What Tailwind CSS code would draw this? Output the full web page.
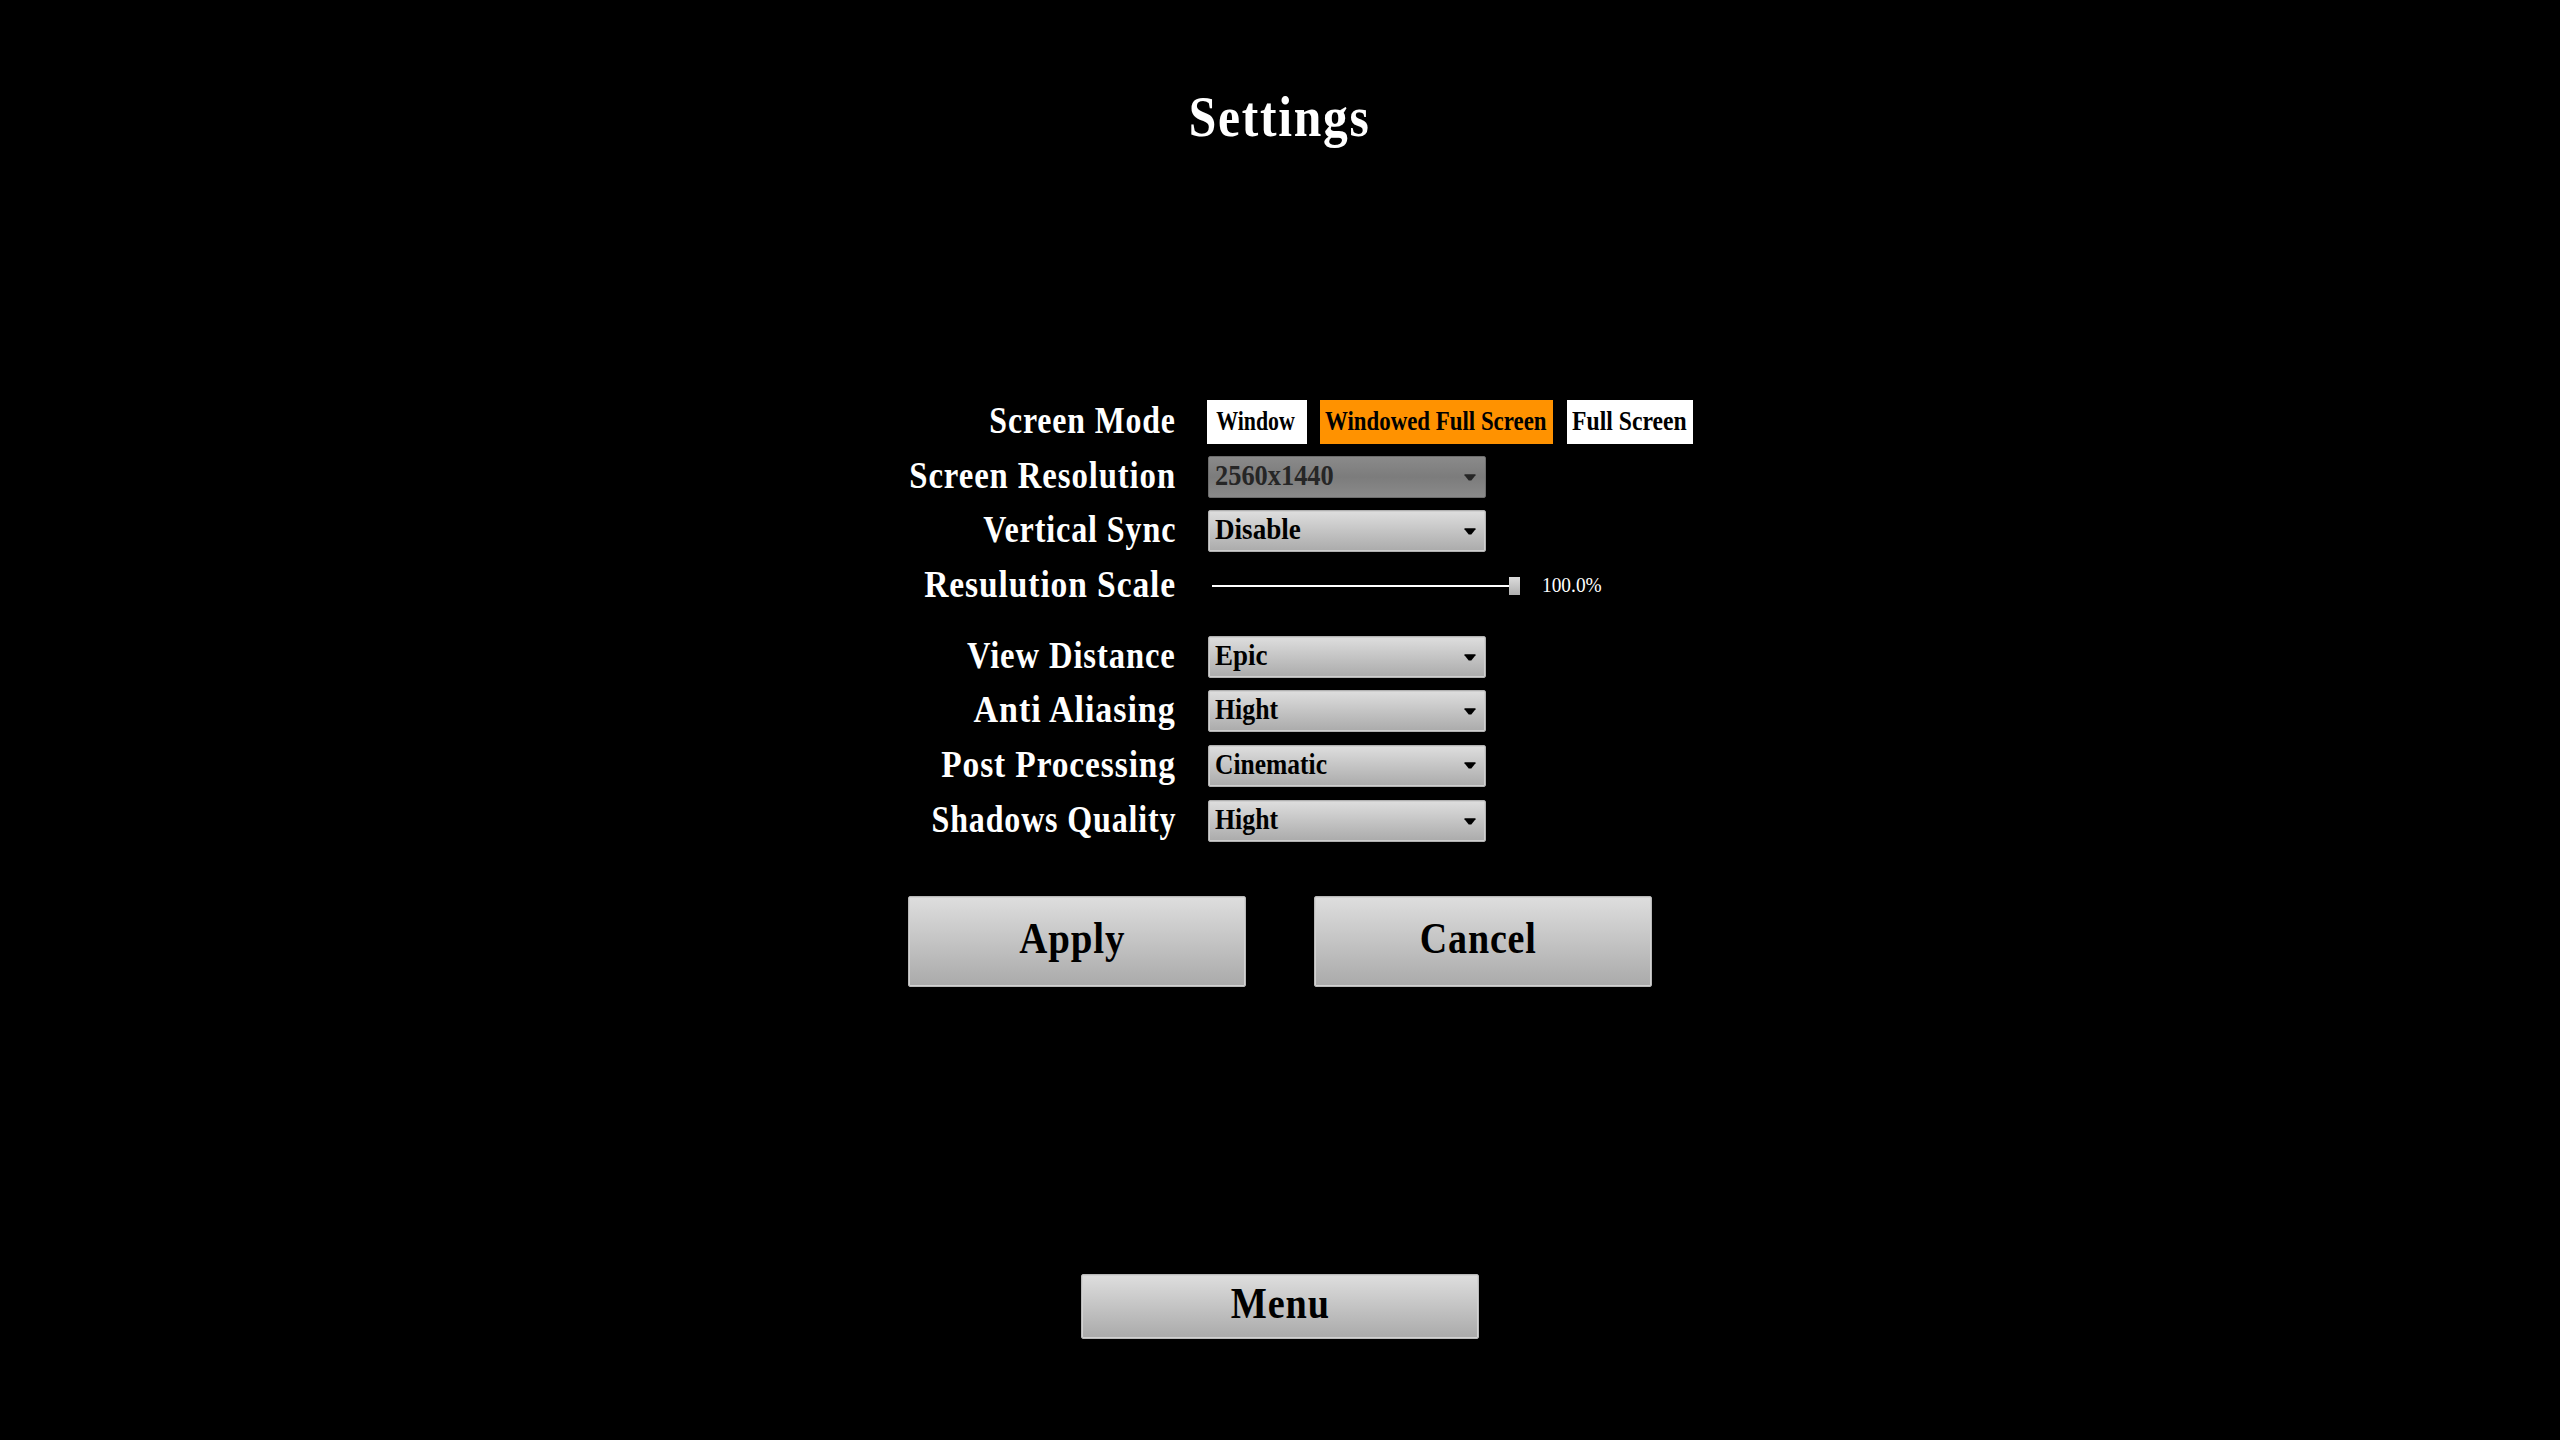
<!DOCTYPE html>
<html lang="en"><head><meta charset="utf-8"><title>Settings</title>
<script src="https://cdn.jsdelivr.net/npm/@tailwindcss/browser@4"></script></head>
<body class="w-[2560px] h-[1440px] overflow-hidden bg-black text-white font-['Liberation_Serif',serif] font-bold whitespace-nowrap">
<main class="flex flex-col items-center h-full">
<h1 class="mt-[87px] h-[60px] leading-[60px] text-[57px] tracking-[2px]"><span class="inline-block" style="transform:scaleX(.869)">Settings</span></h1>
<section id="rows" class="mt-[253px] w-[786px] flex flex-col gap-3 ml-[42px]"></section>
<div class="mt-[54px] flex gap-[68px]">
<button class="w-[338px] h-[91px] pb-[5px] pr-[10px] rounded-xs border border-[#b8b8b8] bg-linear-to-b from-[#dedede] to-[#aaaaaa] text-black text-[45px] tracking-[1px] shadow-[inset_0_0_0_1px_#d2d2d2]"><span class="inline-block" style="transform:scaleX(.865)">Apply</span></button>
<button class="w-[338px] h-[91px] pb-[5px] pr-[10px] rounded-xs border border-[#b8b8b8] bg-linear-to-b from-[#dedede] to-[#aaaaaa] text-black text-[45px] tracking-[1px] shadow-[inset_0_0_0_1px_#d2d2d2]"><span class="inline-block" style="transform:scaleX(.845)">Cancel</span></button>
</div>
<button class="mt-[287px] w-[398px] h-[65px] pb-[6px] rounded-xs border border-[#b8b8b8] bg-linear-to-b from-[#dedede] to-[#aaaaaa] text-black text-[45px] leading-none tracking-[1px] shadow-[inset_0_0_0_1px_#d2d2d2]"><span class="inline-block" style="transform:scaleX(.85)">Menu</span></button>
</main>
<script>
const arrow = '<svg class="w-[12px] h-[7px]" viewBox="0 0 12 7"><path fill="currentColor" d="M0.5 0.3h11v1L7.3 6.5H4.7L0.5 1.3z"/></svg>';
const select = (text, k, off) => `<div class="w-[278px] h-[42px] ml-px pl-[6px] pr-[9px] flex items-center justify-between rounded-xs border text-[29px] leading-none ${off
  ? 'border-[#6c6c6c] bg-linear-to-b from-[#8a8a8a] via-[#7c7c7c] to-[#8a8a8a] text-[#262626]'
  : 'border-[#b0b0b0] bg-linear-to-b from-[#dedede] to-[#ababab] text-black shadow-[inset_0_0_0_1px_#cfcfcf]'}"><span class="pb-[3px] origin-left" style="transform:scaleX(${k})">${text}</span>${arrow}</div>`;
const modes = `<div class="h-[44px] flex text-black text-[27px] leading-none">
  <div class="w-[100px] pb-[2px] pr-[2px] flex items-center justify-center bg-white"><span style="transform:scaleX(.81)">Window</span></div>
  <div class="w-[233px] ml-[13px] pb-[2px] pr-[2px] flex items-center justify-center bg-[#ff9200]"><span style="transform:scaleX(.847)">Windowed Full Screen</span></div>
  <div class="w-[126px] ml-[14px] pb-[2px] pr-[2px] flex items-center justify-center bg-white"><span style="transform:scaleX(.876)">Full Screen</span></div></div>`;
const slider = `<div class="h-[42px] flex items-center"><div class="ml-[5px] w-[297px] h-[2px] bg-white"></div>
  <div class="w-[11px] h-[18px] bg-linear-to-b from-[#dcdcdc] to-[#b0b0b0]"></div>
  <span class="ml-[22px] pb-[2px] text-[22px] leading-none font-normal origin-left" style="transform:scaleX(.88)">100.0%</span></div>`;
const rows = [
  ['Screen Mode', .86, modes, 'h-[44px]'],
  ['Screen Resolution', .886, select('2560x1440', .91, true), 'h-[42px]'],
  ['Vertical Sync', .868, select('Disable', .935), 'h-[42px]'],
  ['Resulution Scale', .906, slider, 'h-[43px] mb-[17px]'],
  ['View Distance', .882, select('Epic', .93), 'h-[42px]'],
  ['Anti Aliasing', .92, select('Hight', .89), 'h-[42px]'],
  ['Post Processing', .903, select('Cinematic', .88), 'h-[43px] mb-px'],
  ['Shadows Quality', .864, select('Hight', .89), 'h-[42px]'],
];
document.getElementById('rows').innerHTML = rows.map(([label, k, control, h]) =>
  `<div class="flex items-center ${h}"><div class="w-[268px] mr-[31px] pb-[3px] flex justify-end text-[37px] leading-none tracking-[1px]"><span class="origin-right" style="transform:scaleX(${k})">${label}</span></div>${control}</div>`).join('');
</script>
</body></html>
